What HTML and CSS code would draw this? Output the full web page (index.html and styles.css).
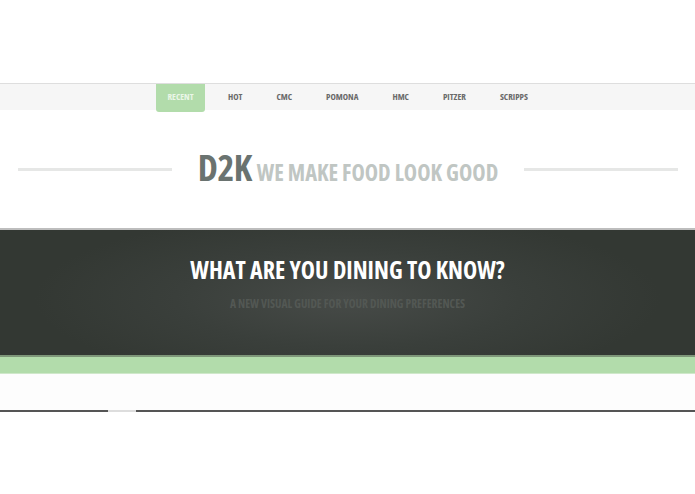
FILE: index.html
```html
<!DOCTYPE html>
<html>
<head>
<meta charset="utf-8">
<link rel="stylesheet" href="styles.css">
</head>
<body>
<div class="top-space"></div>
<nav class="nav">
  <ul class="nav-list">
    <li class="nav-item active">RECENT</li>
    <li class="nav-item">HOT</li>
    <li class="nav-item">CMC</li>
    <li class="nav-item">POMONA</li>
    <li class="nav-item">HMC</li>
    <li class="nav-item">PITZER</li>
    <li class="nav-item">SCRIPPS</li>
  </ul>
</nav>
<header class="brand">
  <span class="rule"></span>
  <h1 class="brand-title"><span class="logo">D2K</span><span class="tagline">WE MAKE FOOD LOOK GOOD</span></h1>
  <span class="rule"></span>
</header>
<section class="hero">
  <h2 class="hero-title">WHAT ARE YOU DINING TO KNOW?</h2>
  <p class="hero-sub">A NEW VISUAL GUIDE FOR YOUR DINING PREFERENCES</p>
</section>
<div class="green-bar"></div>
<div class="gap"></div>
<div class="bottom-line"><span class="glint"></span></div>
</body>
</html>
```
FILE: styles.css
```css
* { box-sizing: border-box; margin: 0; padding: 0; }
html, body { background: #fff; }
body {
  font-family: "Open Sans", "DejaVu Sans", sans-serif;
  font-stretch: 75%;
  font-weight: 700;
  width: 695px;
  overflow: hidden;
}
.top-space { height: 83px; }
.nav {
  height: 27px;
  border-top: 1px solid #dedede;
  background: #f6f6f6;
}
.nav-list {
  list-style: none;
  display: flex;
  padding-left: 156px;
  height: 26px;
  gap: 34px;
}
.nav-item {
  font-size: 9px;
  color: #6a6a6a;
  height: 26px;
  line-height: 26px;
  text-align: center;
}
.nav-item.active {
  width: 49px;
  height: 28px;
  background: #b2dcab;
  color: #eaf6e7;
  border-radius: 0 0 3px 3px;
  margin-right: -11px;
}
.brand {
  height: 118px;
  display: flex;
  align-items: center;
  padding: 0 17px 0 18px;
  gap: 26px;
}
.rule {
  flex: 1;
  height: 3px;
  background: #e6e7e6;
}
.brand-title {
  display: flex;
  align-items: baseline;
  gap: 5px;
  font-weight: 700;
  line-height: 1;
  margin-top: -2px;
}
.logo { font-size: 36px; color: #6a7370; letter-spacing: -0.5px; }
.tagline { font-size: 22.5px; color: #c0c6c3; }
.hero {
  height: 127px;
  border-top: 2px solid #bdbdbd;
  background: radial-gradient(ellipse 45% 70% at 50% 55%, #474b48 0%, #3a3f3b 55%, #333833 100%);
  text-align: center;
  padding-top: 25px;
}
.hero-title {
  font-size: 24px;
  color: #ffffff;
  line-height: 30px;
  font-weight: 700;
}
.hero-sub {
  font-size: 11.5px;
  color: #535854;
  margin-top: 12px;
  line-height: 14px;
}
.green-bar {
  height: 19px;
  background: #b2dcab;
  border-top: 2px solid #7e9679;
  border-bottom: 1px solid #cfe8ca;
}
.gap { height: 36px; background: #fdfdfd; }
.bottom-line {
  height: 2px;
  background: #555;
  position: relative;
}
.glint {
  position: absolute;
  left: 108px;
  top: 0;
  width: 28px;
  height: 2px;
  background: #ddd;
}
```
